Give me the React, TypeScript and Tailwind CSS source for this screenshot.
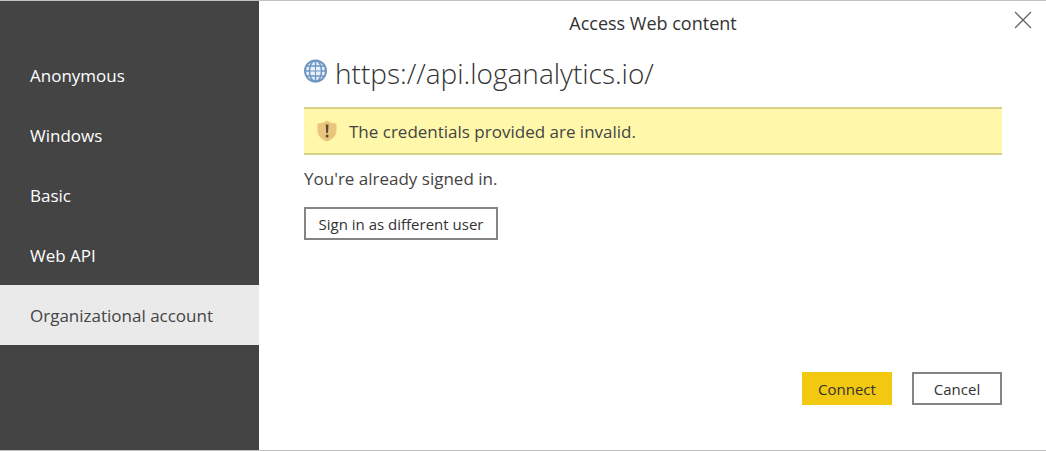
import React from "react";

const methods = ["Anonymous", "Windows", "Basic", "Web API", "Organizational account"];

function Globe() {
  return (
    <svg viewBox="0 0 24 24" className="mt-2 size-6 shrink-0" fill="none" aria-hidden="true">
      <circle cx="11.500" cy="12" r="10.500" fill="#e6f1fa" stroke="#7297bf" strokeWidth="2" />
      <g stroke="#6c97c4" strokeWidth="1.500">
        <ellipse cx="11.500" cy="12" rx="6" ry="10.500" />
        <path d="M11.500 1.500v5.500M11.500 17v5.500M1 12h5M17 12h5" />
        <path d="M2.500 7h18M2.500 17h18" />
        <path d="M11.500 7v10M6 12h11" strokeWidth="1" />
      </g>
    </svg>
  );
}

function Shield() {
  return (
    <svg viewBox="0 0 20 22" className="h-[22px] w-5 shrink-0" aria-hidden="true">
      <path d="M10 0.500C7.500 2.500 4 3.300 0.500 3.500v7c0 5.500 4 9 9.500 11 5.500-2 9.500-5.500 9.500-11v-7C16 3.300 12.500 2.500 10 0.500z" fill="#ecc57c" />
      <path d="M8.700 4.500h2.800l-.5 8.500H9.200z" fill="#544b3c" />
      <circle cx="10.100" cy="16" r="1.500" fill="#544b3c" />
    </svg>
  );
}

export default function App() {
  return (
    <div className="flex min-h-screen border-y border-[#c0c0c0] bg-white font-['Open_Sans','Noto_Sans',sans-serif] text-[#444]">
      <nav aria-label="Authentication method" className="flex w-[259px] shrink-0 flex-col bg-[#444] pt-11">
        {methods.map((m, i) => (
          <button
            key={m}
            type="button"
            aria-current={i === 4 ? "true" : undefined}
            className={
              i === 4
                ? "h-15 bg-[#eaeaea] px-[30px] pt-0.5 text-left text-[17px] text-[#444]"
                : "h-15 px-[30px] pt-0.5 text-left text-[17px] text-white"
            }
          >
            {m}
          </button>
        ))}
      </nav>
      <main className="relative flex min-w-0 flex-1 flex-col pr-11 pb-[45px] pl-[45px]">
        <h1 className="h-11 pt-2 text-center text-[18px] leading-7 text-[#333]">Access Web content</h1>
        <button type="button" aria-label="Close" className="absolute top-2.5 right-3.5">
          <svg viewBox="0 0 18 18" className="size-[18px]" stroke="#666" strokeWidth="1.300" aria-hidden="true">
            <path d="M1 1l16 16M17 1L1 17" />
          </svg>
        </button>
        <div className="flex h-[62px] items-start gap-[7px] pt-1.5">
          <Globe />
          <h2 className="text-[28px] leading-[44px] font-light text-[#333]">https://api.loganalytics.io/</h2>
        </div>
        <div role="alert" className="flex h-12 items-center gap-3 border-y-2 border-[#d6d088] bg-[#fff8ab] px-[13px] text-[17px]">
          <Shield />
          <span className="pt-0.5">The credentials provided are invalid.</span>
        </div>
        <p className="mt-3 text-[17px] leading-6">You're already signed in.</p>
        <button type="button" className="mt-4 h-[33px] w-[194px] border-2 border-[#848484] pt-0.5 text-[15px] text-[#333]">
          Sign in as different user
        </button>
        <div className="mt-auto flex justify-end gap-5">
          <button type="button" className="h-[33px] w-[90px] bg-[#f2c811] pt-0.5 text-[15px] text-[#333]">Connect</button>
          <button type="button" className="h-[33px] w-[90px] border-2 border-[#848484] pt-0.5 text-[15px] text-[#333]">Cancel</button>
        </div>
      </main>
    </div>
  );
}
